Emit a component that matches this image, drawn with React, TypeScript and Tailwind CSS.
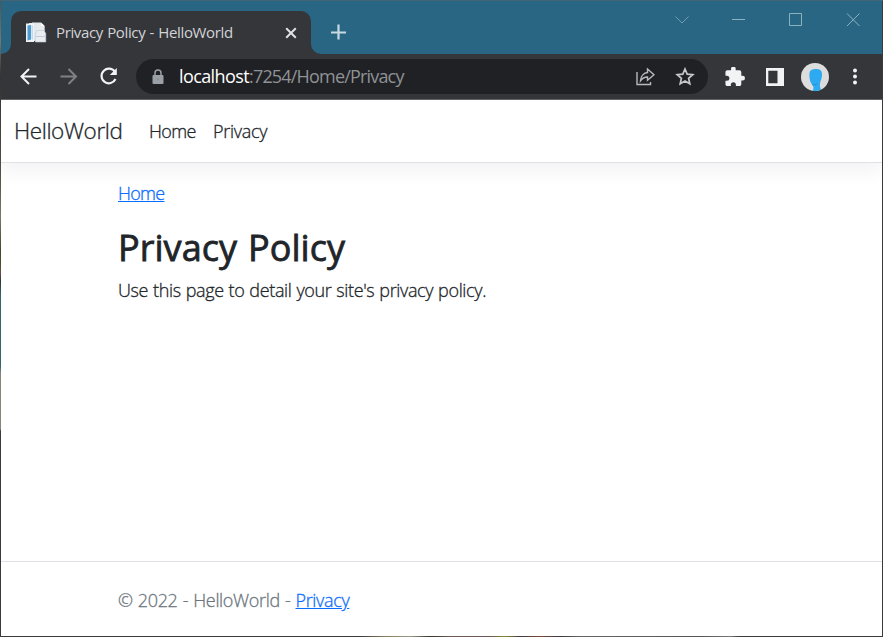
import React from "react";

const Favicon = () => (
  <svg width="22" height="22" viewBox="0 0 22 22" className="shrink-0">
    <path d="M7 .7H16L19.500 4V18H7Z" fill="#e8ebee" stroke="#cdd3d8" strokeWidth=".5" />
    <path d="M4 1H12V19H4Z" fill="#e3e8ed" />
    <path d="M1 1.500H9V20H1Z" fill="#f0f2f5" />
    <path d="M2.500 3.500L6 3V17.500L2.500 18.500Z" fill="#4b9cd3" />
    <path d="M6.500 3.500H8V17.500H6.500Z" fill="#c3d9ea" />
    <path d="M16 .7V4H19.500Z" fill="#fff" />
    <path d="M12 8.500H19L20.800 11.500V20H10.300V12.500Z" fill="#e9edf2" stroke="#bdc6d2" strokeWidth=".6" />
    <path d="M11 14.500H20.500" stroke="#c3ccd8" />
  </svg>
);

const TitleBar = () => (
  <div className="flex h-[53px] shrink-0 bg-[#286683] pr-[22px]">
    <div className="h-[53px] w-[10px] bg-[#35363a]">
      <div className="h-[53px] w-[10px] rounded-br-[10px] bg-[#286683]" />
    </div>
    <div className="flex w-[300px] bg-[#286683] pt-[10px]">
      <div className="flex h-[43px] w-[300px] items-center rounded-t-[10px] bg-[#35363a] pl-[14px] pr-[13px]">
        <Favicon />
        <span className="-mt-[2px] ml-[9px] flex-1 whitespace-nowrap text-[15px] leading-[20px] tracking-[-0.360px] text-[#d2d4d7] [word-spacing:0.7px]">Privacy Policy - HelloWorld</span>
        <svg width="14" height="14" viewBox="0 0 14 14" fill="none" stroke="#dee1e6" strokeWidth="2"><path d="M2.200 2.200 11.800 11.800M11.800 2.200 2.200 11.800" /></svg>
      </div>
    </div>
    <div className="h-[53px] w-[10px] bg-[#35363a]"><div className="h-[53px] w-[10px] rounded-bl-[10px] bg-[#286683]" /></div>
    <svg width="16" height="16" viewBox="0 0 16 16" className="ml-[10px] mt-[23px]" fill="none" stroke="#c7dae2" strokeWidth="2.200"><path d="M7.500 .5v15M0 8.500h15" /></svg>
    <div className="flex-1" />
    <div className="flex gap-[43px] pt-[11px]">
      <svg width="14" height="14" viewBox="0 0 14 14" fill="none" stroke="#709baf"><path d="M.5 4.500 7 11l6.500-6.500" /></svg>
      <svg width="14" height="14" viewBox="0 0 14 14" fill="none" stroke="#8cb2c2"><path d="M0 7.500h13" /></svg>
      <svg width="14" height="14" viewBox="0 0 14 14" fill="none" stroke="#8cb2c2"><path d="M.5 1.500h12v12H.5z" /></svg>
      <svg width="14" height="14" viewBox="0 0 14 14" fill="none" stroke="#8cb2c2"><path d="m1 1.500 12.500 12.500m0-12.500L1 14" /></svg>
    </div>
  </div>
);

const Toolbar = () => (
  <div className="flex h-[46px] shrink-0 items-center border-b border-[#626267] bg-[#35363a] pl-[17px]">
    <svg width="20" height="20" viewBox="0 0 20 20" fill="none" stroke="#f1f3f4" strokeWidth="2"><path d="M18.500 9.500H4M11 2 3.500 9.500l7.500 7.500" /></svg>
    <svg width="20" height="20" viewBox="0 0 20 20" fill="none" stroke="#808185" strokeWidth="2" className="ml-[20px]"><path d="M2.500 9.500h15M10.500 2 18 9.500 10.500 17" /></svg>
    <svg width="22" height="22" viewBox="0 0 22 22" fill="none" className="ml-[20px]">
      <path d="M17 6A7.300 7.300 0 1 0 17.500 13" stroke="#f1f3f4" strokeWidth="2.200" />
      <path d="M18.800 2V9H11.800Z" fill="#f1f3f4" />
    </svg>
    <div className="ml-[16px] flex h-[35px] w-[572px] items-center rounded-full bg-[#202124] pl-[16px] pr-[13px]">
      <svg width="12" height="16" viewBox="0 0 12 16" fill="none"><rect x=".5" y="6" width="11" height="9" rx="1" fill="#9aa0a6" /><path d="M3 7V4a3 3 0 0 1 6 0v3" stroke="#9aa0a6" strokeWidth="1.500" /><circle cx="6" cy="10.500" r=".9" fill="#858a90" /></svg>
      <span className="-mt-[1px] ml-[15px] flex-1 whitespace-nowrap text-[18px] leading-[24px] tracking-[-0.820px] text-[#8f9296]"><span className="tracking-[-0.600px] text-white">localhost</span>:7254/Home/Privacy</span>
      <svg width="20" height="20" viewBox="0 0 20 20" fill="none" stroke="#b8babd" strokeWidth="1.400">
        <path d="M2 5V17.500H15.500V15" />
        <path d="M12.500 2 19 7.800l-6.500 5.500v-3.300C9.500 9.800 7.300 11.300 5.500 13.800c.3-5 3.500-8 7-8.300z" />
      </svg>
      <svg width="20" height="20" viewBox="0 0 20 20" fill="none" stroke="#c6c8cb" strokeWidth="1.700" className="ml-[20px]"><path d="m10 2 2.200 5.100 5.600.5-4.200 3.700 1.200 5.500L10 13.900l-4.800 2.900 1.200-5.500-4.200-3.700 5.600-.5z" /></svg>
    </div>
    <svg width="20" height="20" viewBox="1.500 1.500 21.500 21.500" fill="#f1f3f4" className="ml-[17px]"><path d="M20.500 11H19V7c0-1.100-.9-2-2-2h-4V3.500a2.500 2.500 0 0 0-5 0V5H4c-1.100 0-2 .9-2 2v3.800h1.500a2.700 2.700 0 0 1 0 5.400H2V20c0 1.100.9 2 2 2h3.800v-1.500a2.700 2.700 0 0 1 5.400 0V22H17c1.100 0 2-.9 2-2v-4h1.500a2.500 2.500 0 0 0 0-5z" /></svg>
    <svg width="18" height="18" viewBox="0 0 18 18" className="ml-[21px]"><path d="M0 0H18V18H0ZM2.300 2.700V15.300H11.500V2.700Z" fill="#f1f3f4" fillRule="evenodd" /></svg>
    <svg width="28" height="28" viewBox="0 0 28 28" className="ml-[17px]">
      <circle cx="14" cy="14" r="14" fill="#dddddd" />
      <path d="M8.500 10C9 7 11 6 15 6c4.500 0 6.200 2 6 6 0 4-1.600 5.500-2 8.500-.2 2 .1 4.500 1 6.200a14 14 0 0 1-8.400 1c1.400-2.200 1.200-4.400-.4-6C9 19.500 8 14 8.500 10Z" fill="#2eaaf0" />
      <path d="M11 21.500c2 .9 4 .3 5.500-1" fill="none" stroke="#168bd0" strokeWidth=".8" />
    </svg>
    <svg width="4" height="18" viewBox="0 0 4 18" fill="#f1f3f4" className="ml-[24px]"><circle cx="2" cy="2.500" r="2" /><circle cx="2" cy="8.500" r="2" /><circle cx="2" cy="14.500" r="2" /></svg>
  </div>
);

export default function App() {
  return (
    <div className="flex h-[637px] w-[883px] flex-col overflow-hidden bg-[#3a3a3c] font-['Open_Sans','Noto_Sans',sans-serif] text-[#212529]">
      <div className="h-[1px] shrink-0 bg-[#456473]" />
      <div className="flex h-[635px] shrink-0">
        <div className="w-[1px] shrink-0 bg-[linear-gradient(#4c5457_0px,#77766f_40px,#333_75px,#55554c_180px,#777a68_215px,#3f4a2c_250px,#50502c_265px,#704c50_272px,#2f3a30_280px,#35666c_295px,#35666c_365px,#85857a_372px,#85857a_428px,#3a3a3c_430px,#3a3a3c_635px)]" />
        <div className="flex w-[881px] flex-col bg-white">
          <TitleBar />
          <Toolbar />
          <header className="flex h-[63px] shrink-0 items-center whitespace-nowrap border-b border-[#dee2e6] pl-[13px] font-light shadow-[0_9px_18px_rgba(0,0,0,0.05)] [-webkit-text-stroke:0.3px]">
            <span className="w-[135px] text-[22.500px] leading-[34px] tracking-[-0.400px]">HelloWorld</span>
            <nav className="flex text-[18px] leading-[27px]">
              <a className="w-[64px] tracking-[-0.650px]">Home</a>
              <a className="tracking-[-0.300px]">Privacy</a>
            </nav>
          </header>
          <main className="flex flex-1 flex-col items-start whitespace-nowrap pl-[117px] pt-[17px]">
            <a className="text-[18px] font-light leading-[27px] tracking-[-0.700px] text-[#0d6efd] underline [-webkit-text-stroke:0.3px]">Home</a>
            <h1 className="mt-[19px] text-[36px] font-normal leading-[43px] tracking-[0.050px] [-webkit-text-stroke:0.8px] [word-spacing:1.500px]">Privacy Policy</h1>
            <p className="mt-[8px] text-[18px] font-light leading-[27px] tracking-[-0.360px] [-webkit-text-stroke:0.3px] [word-spacing:0.6px]">Use this page to detail your site's privacy policy.</p>
          </main>
          <footer className="h-[75px] shrink-0 whitespace-nowrap border-t border-[#dee2e6] pl-[117px] pt-[25px] text-[18px] font-light leading-[27px] tracking-[-0.340px] text-[#6c757d] [-webkit-text-stroke:0.3px] [word-spacing:0.8px]">
            © 2022 - HelloWorld - <a className="text-[#0d6efd] underline">Privacy</a>
          </footer>
        </div>
        <div className="w-[1px] bg-[#3a3a3c]" />
      </div>
      <div className="h-[1px] bg-[linear-gradient(90deg,#3a3a3c_360px,#8a7a60_385px,#9a9a8a_410px,#3a3434_430px,#6e5856_450px,#6e5856_490px,#8a8a30_505px,#3a3a3c_520px,#7a4a38_540px,#3a3a3c_560px,#666_580px,#555_700px,#777_730px,#3a3a3c_740px)]" />
    </div>
  );
}
